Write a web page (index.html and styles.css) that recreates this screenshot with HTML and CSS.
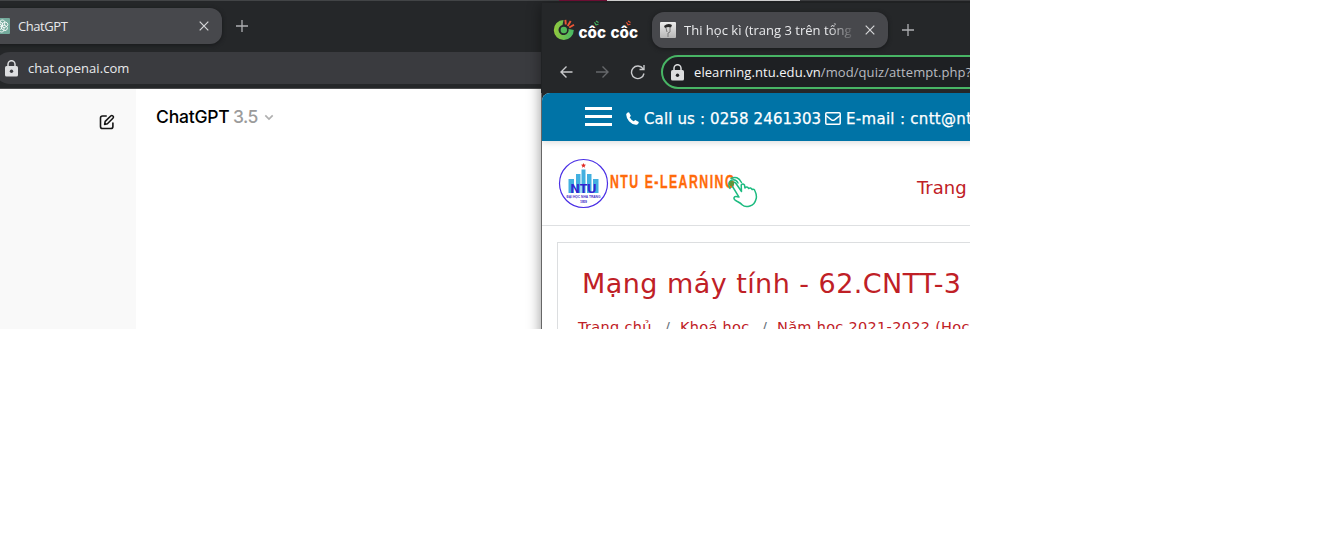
FILE: index.html
```
<!DOCTYPE html>
<html lang="vi">
<head>
<meta charset="utf-8">
<title>Desktop</title>
<link rel="stylesheet" href="styles.css">
</head>
<body>
<main class="desktop">
  <section class="chat">
    <div class="strip"></div>
    <div class="tabs chat-tabs">
      <div class="tab chat-tab">
        <svg class="gpt" width="16" height="16" viewBox="0 0 16 16"><rect width="16" height="16" rx="1" fill="#74aa9c"/><g fill="none" stroke="#fff" stroke-width=".8"><path id="petal" d="M6 7V4.200a2.400 2.400 0 014.600-.8L10.700 7 8 8.500"/><use href="#petal" transform="rotate(60 8 8)"/><use href="#petal" transform="rotate(120 8 8)"/><use href="#petal" transform="rotate(180 8 8)"/><use href="#petal" transform="rotate(240 8 8)"/><use href="#petal" transform="rotate(300 8 8)"/></g></svg>
        <span class="ui t-gpt">ChatGPT</span>
        <svg class="close" width="10" height="10" viewBox="0 0 10 10"><path d="M.7.7l8.6 8.6M9.3.7L.7 9.3" stroke="#d6d7d9" stroke-width="1.2"/></svg>
      </div>
      <svg class="plus" width="12" height="12" viewBox="0 0 12 12"><path d="M6 0v12M0 6h12" stroke="#aeb0b2" stroke-width="1.3"/></svg>
    </div>
    <div class="chat-url">
      <svg width="13" height="17" viewBox="0 0 13 17"><path d="M3 7V4.2a3.5 3.5 0 017 0V7" fill="none" stroke="#dddee0" stroke-width="1.5"/><rect y="6" width="13" height="10.5" rx="1.6" fill="#dddee0"/><circle cx="6.5" cy="11.2" r="1.7" fill="#393a3e"/></svg>
      <span class="ui t-url">chat.openai.com</span>
    </div>
    <div class="chat-page">
      <aside class="side">
        <svg width="16" height="16" viewBox="0 0 16 16" fill="none" stroke="#161616" stroke-width="1.6" stroke-linejoin="round" stroke-linecap="round"><path d="M7.200 2H3.600Q1.500 2 1.500 4v8.400q0 2.100 2.100 2.100h8.200q2.100 0 2.100-2.100V9"/><path d="M5.600 10.400l.6-3L11.700 2q1.100-1 2.200 0t0 2.200L8.400 9.700z"/></svg>
      </aside>
      <div class="model"><b>ChatGPT</b><span>3.5</span><svg width="10" height="7" viewBox="0 0 10 7"><path d="M1.300 1.300L5 5l3.700-3.700" fill="none" stroke="#b0b0b0" stroke-width="1.700"/></svg></div>
    </div>
  </section>

  <section class="coc">
    <div class="tabs coc-tabs">
      <svg class="coclogo" width="86" height="24" viewBox="0 0 86 24">
        <defs><linearGradient id="cg"><stop stop-color="#94c93d"/><stop offset="1" stop-color="#45b865"/></linearGradient></defs>
        <path d="M10.500 2A10 10 0 1020.800 12L15.600 11A5.100 5.100 0 119.500 7z" fill="url(#cg)"/>
        <circle cx="10.800" cy="12" r="3.200" fill="#52b95a"/>
        <path d="M12.400 1.800l.4 4.700M17.700 3l-3 5M21 6.700l-4.800 2.800" stroke="#ed5635" stroke-width="1.900"/>
        <text x="25.500" y="19.500" textLength="27.500" lengthAdjust="spacingAndGlyphs" class="cocword">côc</text>
        <text x="57.500" y="19.500" textLength="27.500" lengthAdjust="spacingAndGlyphs" class="cocword">côc</text>
        <g fill="none" stroke-width="1.100"><path d="M41.500 4.200l1.500 2.600 2.500-.5M43 3l2.500 1.500" stroke="#43b65f"/><path d="M73.500 4.200l1.500 2.600 2.500-.5M75 3l2.500 1.500" stroke="#ed5635"/></g>
      </svg>
      <div class="tab coc-tab">
        <svg width="16" height="16" viewBox="0 0 16 16"><defs><linearGradient id="fv" x2="0" y2="1"><stop stop-color="#ececec"/><stop offset="1" stop-color="#b5b5b5"/></linearGradient></defs><rect width="16" height="16" rx="1" fill="url(#fv)"/><path d="M4 4q4-3.500 8-1l-1 2.500-3-.5-3 1z" fill="#292929"/><path d="M6 6l1 4M10 5v5l-2 1v4" stroke="#777" fill="none"/></svg>
        <span class="ui t-quiz">Thi học kì (trang 3 trên tổng s</span>
        <svg class="close" width="10" height="10" viewBox="0 0 10 10"><path d="M.7.7l8.600 8.600M9.300.7L.7 9.300" stroke="#d6d7d9" stroke-width="1.200"/></svg>
      </div>
      <svg class="plus" width="12" height="12" viewBox="0 0 12 12"><path d="M6 0v12M0 6h12" stroke="#aeb0b2" stroke-width="1.300"/></svg>
    </div>
    <div class="nav">
      <svg width="90" height="16" viewBox="0 0 90 16" fill="none" stroke="#c9cacc" stroke-width="1.400"><path d="M14.500 8H3M8.500 2.500L3 8l5.500 5.500"/><path d="M38 8h11.500M44.500 2.500L50 8l-5.500 5.500" stroke="#66686b"/><path d="M85 4.700A6.300 6.300 0 1086 9.500M86 1v4.500h-4.500"/></svg>
      <div class="address">
        <svg width="13" height="17" viewBox="0 0 13 17"><path d="M3 7V4.200a3.500 3.500 0 017 0V7" fill="none" stroke="#dddee0" stroke-width="1.500"/><rect y="6" width="13" height="10.500" rx="1.600" fill="#dddee0"/><circle cx="6.500" cy="11.200" r="1.700" fill="#202124"/></svg>
        <span class="ui t-addr"><b>elearning.ntu.edu.vn</b>/mod/quiz/attempt.php?</span>
      </div>
    </div>
    <div class="page">
      <div class="topbar">
        <div class="burger"><i></i><i></i><i></i></div>
        <svg class="phone" width="13" height="13" viewBox="0 0 13 13"><path d="M.3 2Q.8.500 3 .2L4.900 3.900 3.600 5.200Q5 7.800 7.800 9.300L9.200 8l3.700 2Q12.500 12.300 11 12.700 7 13.500 3 9.300-.2 5 .3 2z" fill="#fff"/></svg>
        <span class="t-call">Call us : 0258 2461303</span>
        <svg class="mail" width="16" height="13" viewBox="0 0 16 13"><g fill="none" stroke="#fff" stroke-width="1.500"><rect x=".8" y=".8" width="14.400" height="11.400" rx="1"/><path d="M1 3.500l5.500 4.300q1.500 1 3 0L15 3.500"/></g></svg>
        <span class="t-mail">E-mail : cntt@nt</span>
      </div>
      <header class="brand">
        <svg width="200" height="52" viewBox="0 0 200 52">
          <circle cx="25.500" cy="25.500" r="24" fill="#fff" stroke="#4a2fe5" stroke-width="1.200"/>
          <path d="M25.500 5l.7 1.600 1.800.1-1.400 1.200.4 1.800-1.500-1-1.600 1 .5-1.800L23 6.700l1.800-.1z" fill="#e12b24"/>
          <path d="M10.500 21h5.500v14h-5.500zM18 16h4.500v19H18zM23.500 11.500h4V35h-4zM29 16h4.500v19H29zM35 21h5.500v14H35z" fill="#43b0e0"/>
          <text x="12.500" y="34.500" textLength="26" lengthAdjust="spacingAndGlyphs" class="ntu">NTU</text>
          <text x="8.500" y="39.800" textLength="34" lengthAdjust="spacingAndGlyphs" class="uni">ĐẠI HỌC NHA TRANG</text>
          <text x="22" y="44.500" textLength="7" class="year">1959</text>
          <text x="52" y="30.300" textLength="126" lengthAdjust="spacingAndGlyphs" class="elearn">NTU E-LEARNING</text>
          <g fill="none" stroke="#1dbb80" stroke-width="1.500" stroke-linejoin="round" stroke-linecap="round">
            <path d="M174.500 25q1.800-1.700 3.500.5l5.500 8-.3-6.500q1.500-2 3.300 0l.4 3q2-2.300 3.800.5 2-1.500 3.500 1 2-1 2.800 1.500 2.300 5 .9 8.500-1.300 5.300-6 6.500-5 1.500-7.500-1-1.500-1.800-5-3.500-3.800-2-3.400-3.700.8-2.300 5-.7L174.500 28.500q-1.300-2 0-3.500z"/>
            <path d="M172 30.500q-3-5.500 1-8 4.500-2.300 7 2.500M173 20.500q6.500-3.500 10.500 4"/>
          </g><circle cx="173.500" cy="25.500" r="2.600" fill="#609339"/>
        </svg>
        <span class="t-home">Trang</span>
      </header>
      <article class="card">
        <h1><span class="t-title">Mạng máy tính - 62.CNTT-3</span></h1>
        <div class="crumbs"><span class="c1">Trang chủ</span><i>/</i><span class="c2">Khoá học</span><i>/</i><span class="c3">Năm học 2021-2022 (Học</span></div>
      </article>
    </div>
  </section>
</main>
</body>
</html>
```
FILE: styles.css
```
* { box-sizing: border-box; }
body { margin: 0; background: #fff; }
svg { display: block; flex: none; }
span { white-space: nowrap; flex: none; }
.desktop { position: relative; width: 970px; height: 329px; overflow: hidden; font-family: "DejaVu Sans", sans-serif; }
.ui { font-family: "Open Sans", "Noto Sans", sans-serif; font-size: 13px; color: #e8e9eb; }

.chat { height: 329px; background: #252729; display: flex; flex-direction: column; }
.strip { height: 1px; background: linear-gradient(90deg, #424446 559px, #79103a 559px, #79103a 607px, #e6e6e6 607px, #e6e6e6 800px, #424446 800px); }
.tabs { display: flex; align-items: center; }
.chat-tabs { padding-top: 7px; height: 43px; }
.tab { height: 36px; border-radius: 12px; background: #47484c; display: flex; align-items: center; box-shadow: 0 1px 4px #17181a; }
.chat-tab { width: 234px; margin-left: -12px; padding: 0 13px 0 6px; }
.t-gpt { margin-left: 8px; letter-spacing: -.42px; padding-bottom: 1px; }
.close { margin-left: auto; }
.chat-tabs .plus { margin-left: 14px; }
.chat-url { height: 32px; margin: 8px 0 4px -6px; border-radius: 16px; background: #3a3b3f; display: flex; align-items: center; padding-left: 11px; }
.t-url { margin-left: 10px; letter-spacing: .06px; }
.chat-page { flex: 1; border-top: 1px solid #4b4c4e; display: flex; background: #fff; }
.side { width: 136px; background: #f9f9f9; padding: 25px 0 0 99px; }
.model { display: flex; align-items: center; height: 22px; margin: 16px 0 0 20px; font: 500 17.5px "Inter", sans-serif; color: #9b9b9b; }
.model b { font-weight: 500; color: #000; width: 77px; letter-spacing: -.2px; }
.model span { width: 31px; letter-spacing: -.6px; }
.model svg { margin-top: 2px; }

.coc { position: absolute; left: 541px; top: 3px; width: 520px; height: 340px; background: #252729; box-shadow: 0 2px 13px rgba(0,0,0,.42); border-left: 1px solid #66686a; border-image: linear-gradient(#202224 90px, #666 90px) 1; }
.coc-tabs { height: 45px; padding: 9px 0 0 11px; }
.coc-tab { width: 236px; margin-left: 13px; padding: 0 13px 0 8px; }
.cocword { font: 800 16px "Inter", sans-serif; fill: #fff; }
.t-quiz { width: 172px; overflow: hidden; margin-left: 8px; padding-bottom: 1px; letter-spacing: .02px; -webkit-mask-image: linear-gradient(90deg, #000 145px, transparent 172px); }
.coc-tabs .plus { margin-left: 14px; }
.nav { display: flex; align-items: center; padding: 7px 0 0 16px; height: 41px; }
.address { margin-left: 13px; width: 400px; height: 34px; flex: none; border: 2px solid #48b565; border-radius: 17px; background: #1e2023; display: flex; align-items: center; padding-left: 8px; }
.t-addr { margin-left: 10px; color: #b9bbc0; letter-spacing: .08px; }
.t-addr b { font-weight: 400; color: #f4f5f6; }
.page { margin-top: 4px; height: 260px; border-radius: 8px 0 0 0; overflow: hidden; background: #fff; }
.topbar { height: 48px; background: #0073a6; display: flex; align-items: center; padding: 2px 0 0 43px; color: #fff; font-size: 15px; letter-spacing: .13px; -webkit-text-stroke: .25px #fff; box-shadow: 0 2px 6px rgba(0,0,0,.13); position: relative; }
.burger { width: 27px; height: 19px; flex: none; display: flex; flex-direction: column; justify-content: space-between; margin-bottom: 4px; }
.burger i { height: 3px; background: #fff; }
.phone { margin-left: 14px; }
.t-call { width: 177px; margin-left: 5px; padding-top: 2px; }
.mail { margin-left: 4px; }
.t-mail { margin-left: 5px; padding-top: 2px; letter-spacing: .3px; }
.brand { height: 85px; border-bottom: 1px solid #dee0e2; display: flex; padding: 17px 0 0 16px; }
.t-home { margin: 18px 0 0 159px; font-size: 18px; line-height: 24px; color: #bf2026; }
.ntu { font: bold 13px "Liberation Sans", sans-serif; fill: #3420d0; }
.uni { font: bold 4px "Liberation Sans", sans-serif; fill: #4530c8; }
.year { font: bold 3.5px "Liberation Sans", sans-serif; fill: #4530c8; }
.elearn { font: bold 18px "Liberation Sans", sans-serif; letter-spacing: 2.2px; fill: #ff6a0a; stroke: #ff6a0a; stroke-width: .35px; }
.card { margin: 16px 0 0 15px; height: 200px; border: 1px solid #dcdee0; padding: 24px 0 0 20px; color: #bf2026; }
h1 { margin: 0 0 0 4px; font-size: 27px; font-weight: 400; line-height: 34px; letter-spacing: .45px; }
.crumbs { display: flex; font-size: 14.5px; line-height: 20px; margin-top: 16px; letter-spacing: .3px; }
.crumbs i { font-style: normal; color: #6c757d; width: 15px; }
.c1 { width: 87px; }
.c2 { width: 82px; }
```
